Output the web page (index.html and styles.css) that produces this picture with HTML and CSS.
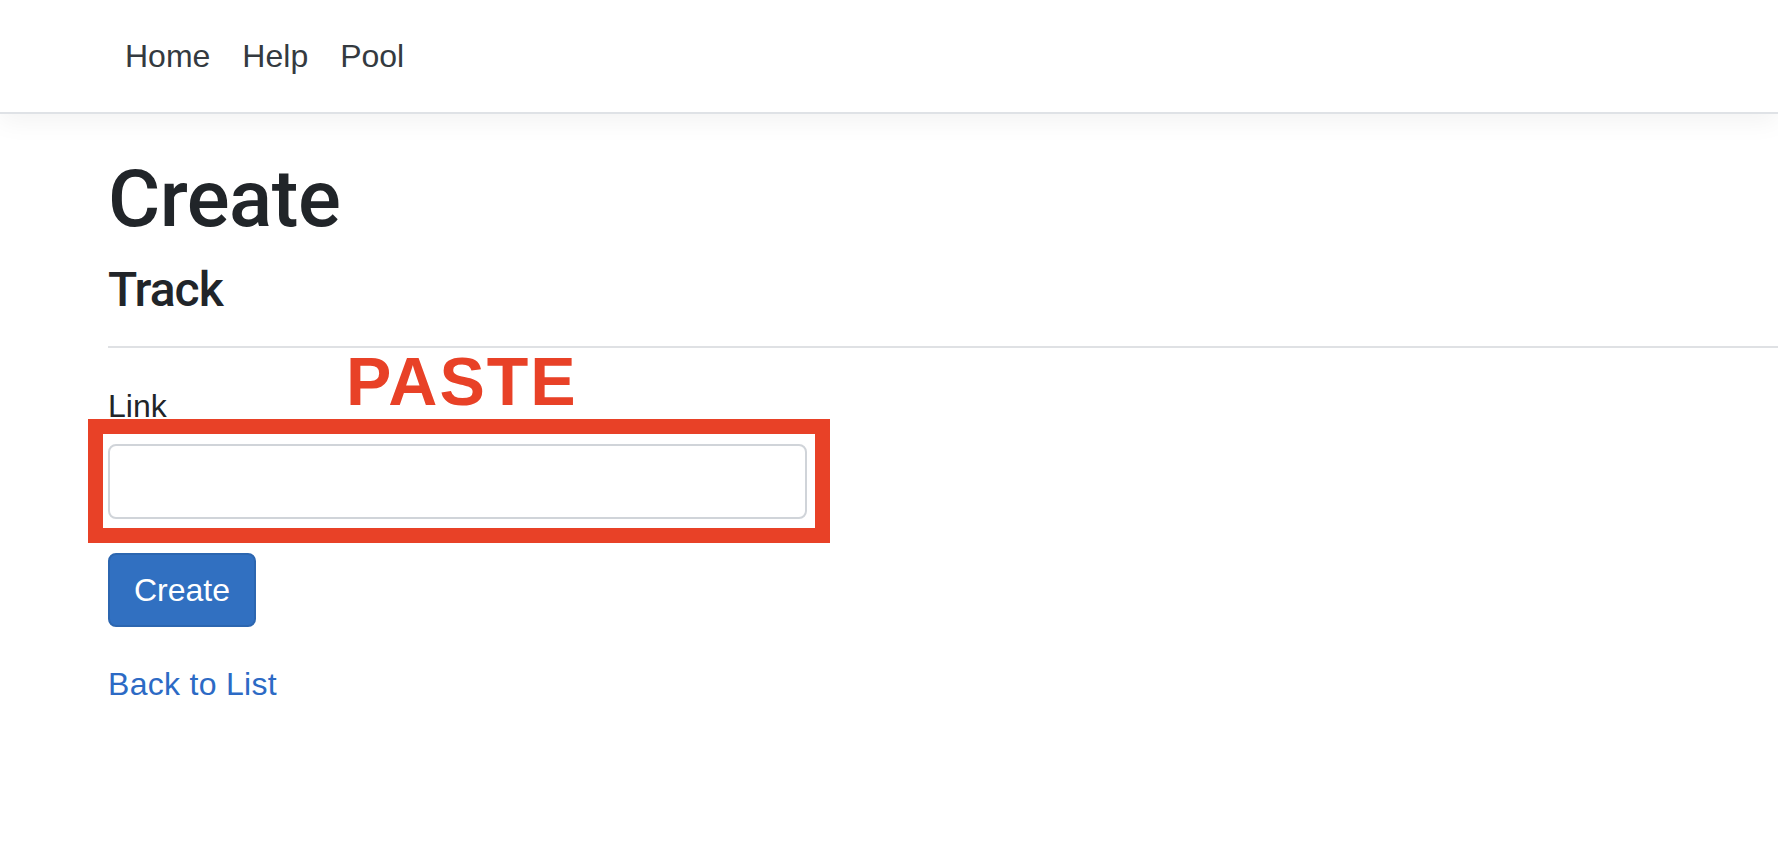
FILE: index.html
```html
<!DOCTYPE html>
<html lang="en">
<head>
<meta charset="utf-8">
<title>Create - Track</title>
<link rel="stylesheet" href="styles.css">
</head>
<body>
<header class="site-header">
  <nav class="navbar">
    <ul class="nav-list">
      <li><a class="nav-link" href="#">Home</a></li>
      <li><a class="nav-link" href="#">Help</a></li>
      <li><a class="nav-link" href="#">Pool</a></li>
    </ul>
  </nav>
</header>
<main class="container">
  <h1 class="page-title">Create</h1>
  <h4 class="entity-title">Track</h4>
  <hr class="divider">
  <form class="create-form">
    <div class="form-group">
      <label class="form-label" for="link">Link</label>
      <input class="form-control" id="link" type="text">
      <div class="annotation">
        <span class="annotation-text">PASTE</span>
        <div class="annotation-frame"></div>
      </div>
    </div>
    <button class="btn-primary" type="submit">Create</button>
  </form>
  <div class="back-row"><a class="back-link" href="#">Back to List</a></div>
</main>
</body>
</html>
```
FILE: styles.css
```css
* { box-sizing: border-box; }
html, body { margin: 0; padding: 0; background: #fff; }
body {
  font-family: "Liberation Sans", Arial, Helvetica, sans-serif;
  font-size: 32px;
  line-height: 1.5;
  color: #212529;
}
.site-header {
  height: 114px;
  border-bottom: 2px solid #dfe2e6;
  box-shadow: 0 8px 24px rgba(0, 0, 0, 0.05);
  background: #fff;
  position: relative;
  z-index: 1;
}
.navbar {
  height: 112px;
  display: flex;
  align-items: center;
  padding-left: 109px;
}
.nav-list {
  list-style: none;
  margin: 0;
  padding: 0;
  display: flex;
}
.nav-link {
  display: block;
  padding: 0 16px;
  color: #343a40;
  text-decoration: none;
  line-height: 48px;
}
.container {
  padding: 37px 0 0 108px;
}
.page-title {
  margin: 0;
  font-family: Roboto, "Liberation Sans", Arial, sans-serif;
  font-size: 80px;
  font-weight: 500;
  line-height: 96px;
  letter-spacing: -0.5px;
  color: #212529;
}
.entity-title {
  margin: 14px 0 0;
  font-family: Roboto, "Liberation Sans", Arial, sans-serif;
  font-size: 48px;
  font-weight: 500;
  line-height: 57.6px;
  letter-spacing: -1px;
  color: #212529;
}
.divider {
  margin: 27px 0 0;
  border: 0;
  border-top: 2px solid #dfe1e4;
  height: 0;
}
.create-form {
  margin: 0;
}
.form-group {
  position: relative;
  margin-top: 34px;
  width: 699px;
}
.form-label {
  display: block;
  line-height: 48px;
}
.form-control {
  display: block;
  margin-top: 14px;
  width: 699px;
  height: 75px;
  border: 2px solid #d0d4d9;
  border-radius: 8px;
  background: #fff;
  font: inherit;
  padding: 12px 24px;
}
.annotation {
  position: absolute;
  left: 0;
  top: 0;
  width: 0;
  height: 0;
}
.annotation-text {
  position: absolute;
  left: 238px;
  top: -35px;
  font-size: 68px;
  font-weight: 700;
  line-height: 68px;
  letter-spacing: 2px;
  color: #e84127;
  white-space: nowrap;
}
.annotation-frame {
  position: absolute;
  left: -20px;
  top: 37px;
  width: 742px;
  height: 124px;
  border: 15px solid #e84127;
}
.btn-primary {
  display: block;
  margin-top: 34px;
  height: 74px;
  padding: 0 24px;
  border: 2px solid #2c66b0;
  border-radius: 8px;
  background: #3170c1;
  color: #fff;
  font: inherit;
  line-height: 1;
}
.back-row {
  margin-top: 33px;
  line-height: 48px;
}
.back-link {
  color: #2c6ac5;
  text-decoration: none;
  letter-spacing: 0.3px;
}
```
